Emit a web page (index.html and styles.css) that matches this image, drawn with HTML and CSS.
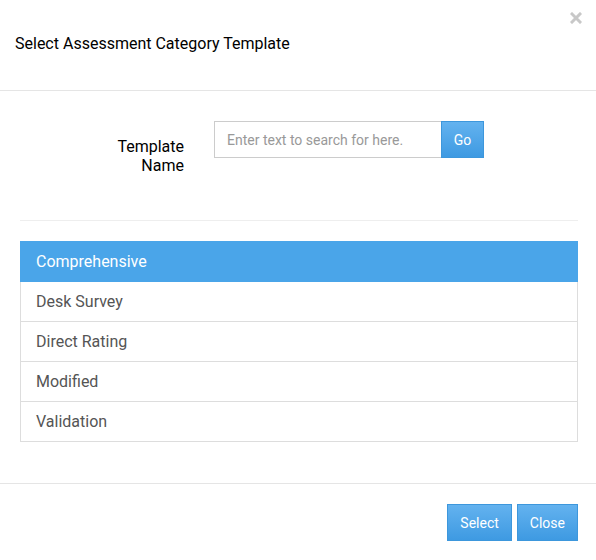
FILE: index.html
```html
<!DOCTYPE html>
<html>
<head>
<meta charset="utf-8">
<link rel="stylesheet" href="styles.css">
</head>
<body>
<div class="modal">
  <div class="modal-header">
    <h4 class="title">Select Assessment Category Template</h4>
    <span class="close"><svg width="12" height="12" viewBox="0 0 12 12"><path d="M2 2 L10 10 M10 2 L2 10" stroke="#c8c8c8" stroke-width="3" stroke-linecap="square"/></svg></span>
  </div>
  <div class="modal-body">
    <div class="form-row">
      <label class="label">Template Name</label>
      <div class="input-group">
        <input class="input" type="text" placeholder="Enter text to search for here.">
        <button class="btn btn-go">Go</button>
      </div>
    </div>
    <hr class="divider">
    <ul class="list">
      <li class="item active">Comprehensive</li>
      <li class="item">Desk Survey</li>
      <li class="item">Direct Rating</li>
      <li class="item">Modified</li>
      <li class="item">Validation</li>
    </ul>
  </div>
  <div class="modal-footer">
    <button class="btn">Select</button>
    <button class="btn">Close</button>
  </div>
</div>
</body>
</html>
```

FILE: styles.css
```css
* { box-sizing: border-box; }
html, body { margin: 0; padding: 0; background: #fff; }
body { font-family: Roboto, "Liberation Sans", sans-serif; color: #222; }
.modal { width: 596px; }
.modal-header {
  position: relative;
  height: 91px;
  border-bottom: 1px solid #e5e5e5;
  padding: 34px 15px 0;
}
.title { margin: 0; font-size: 16px; font-weight: 400; line-height: 20px; color: #000; }
.close {
  position: absolute;
  top: 12px;
  right: 14px;
  width: 12px;
  height: 12px;
  display: block;
  line-height: 0;
}
.modal-body { padding: 30px 18px 0 20px; }
.form-row { display: flex; align-items: flex-start; gap: 30px; }
.label {
  width: 164px;
  text-align: right;
  font-size: 16px;
  line-height: 19px;
  color: #000;
  padding: 16px 0 0 96px;
}
.input-group { display: flex; }
.input {
  width: 227px;
  height: 37px;
  border: 1px solid #ccc;
  border-right: none;
  padding: 0 12px;
  font-family: inherit;
  font-size: 14px;
  color: #555;
  outline: none;
}
.input::placeholder { color: #999; }
.btn {
  font-family: inherit;
  font-size: 14px;
  color: #fff;
  border: 1px solid #3d97dc;
  background: linear-gradient(#63b2ef, #3e9ae2);
  height: 37px;
  padding: 0 12px;
  cursor: pointer;
}
.btn-go { width: 43px; padding: 0; }
.divider { border: 0; border-top: 1px solid #eee; margin: 45px 0 20px; }
.list { list-style: none; margin: 0; padding: 0; }
.item {
  height: 40px;
  line-height: 39px;
  padding: 0 15px;
  font-size: 16px;
  color: #555;
  border: 1px solid #ddd;
  border-top: none;
}
.item.active {
  height: 41px;
  line-height: 41px;
  background: #4aa5e9;
  border-color: #4aa5e9;
  color: #fff;
}
.modal-footer {
  margin-top: 41px;
  border-top: 1px solid #e5e5e5;
  padding: 20px 18px 0;
  display: flex;
  justify-content: flex-end;
  gap: 5px;
}
.modal-footer .btn { padding: 0 12px; }
```
